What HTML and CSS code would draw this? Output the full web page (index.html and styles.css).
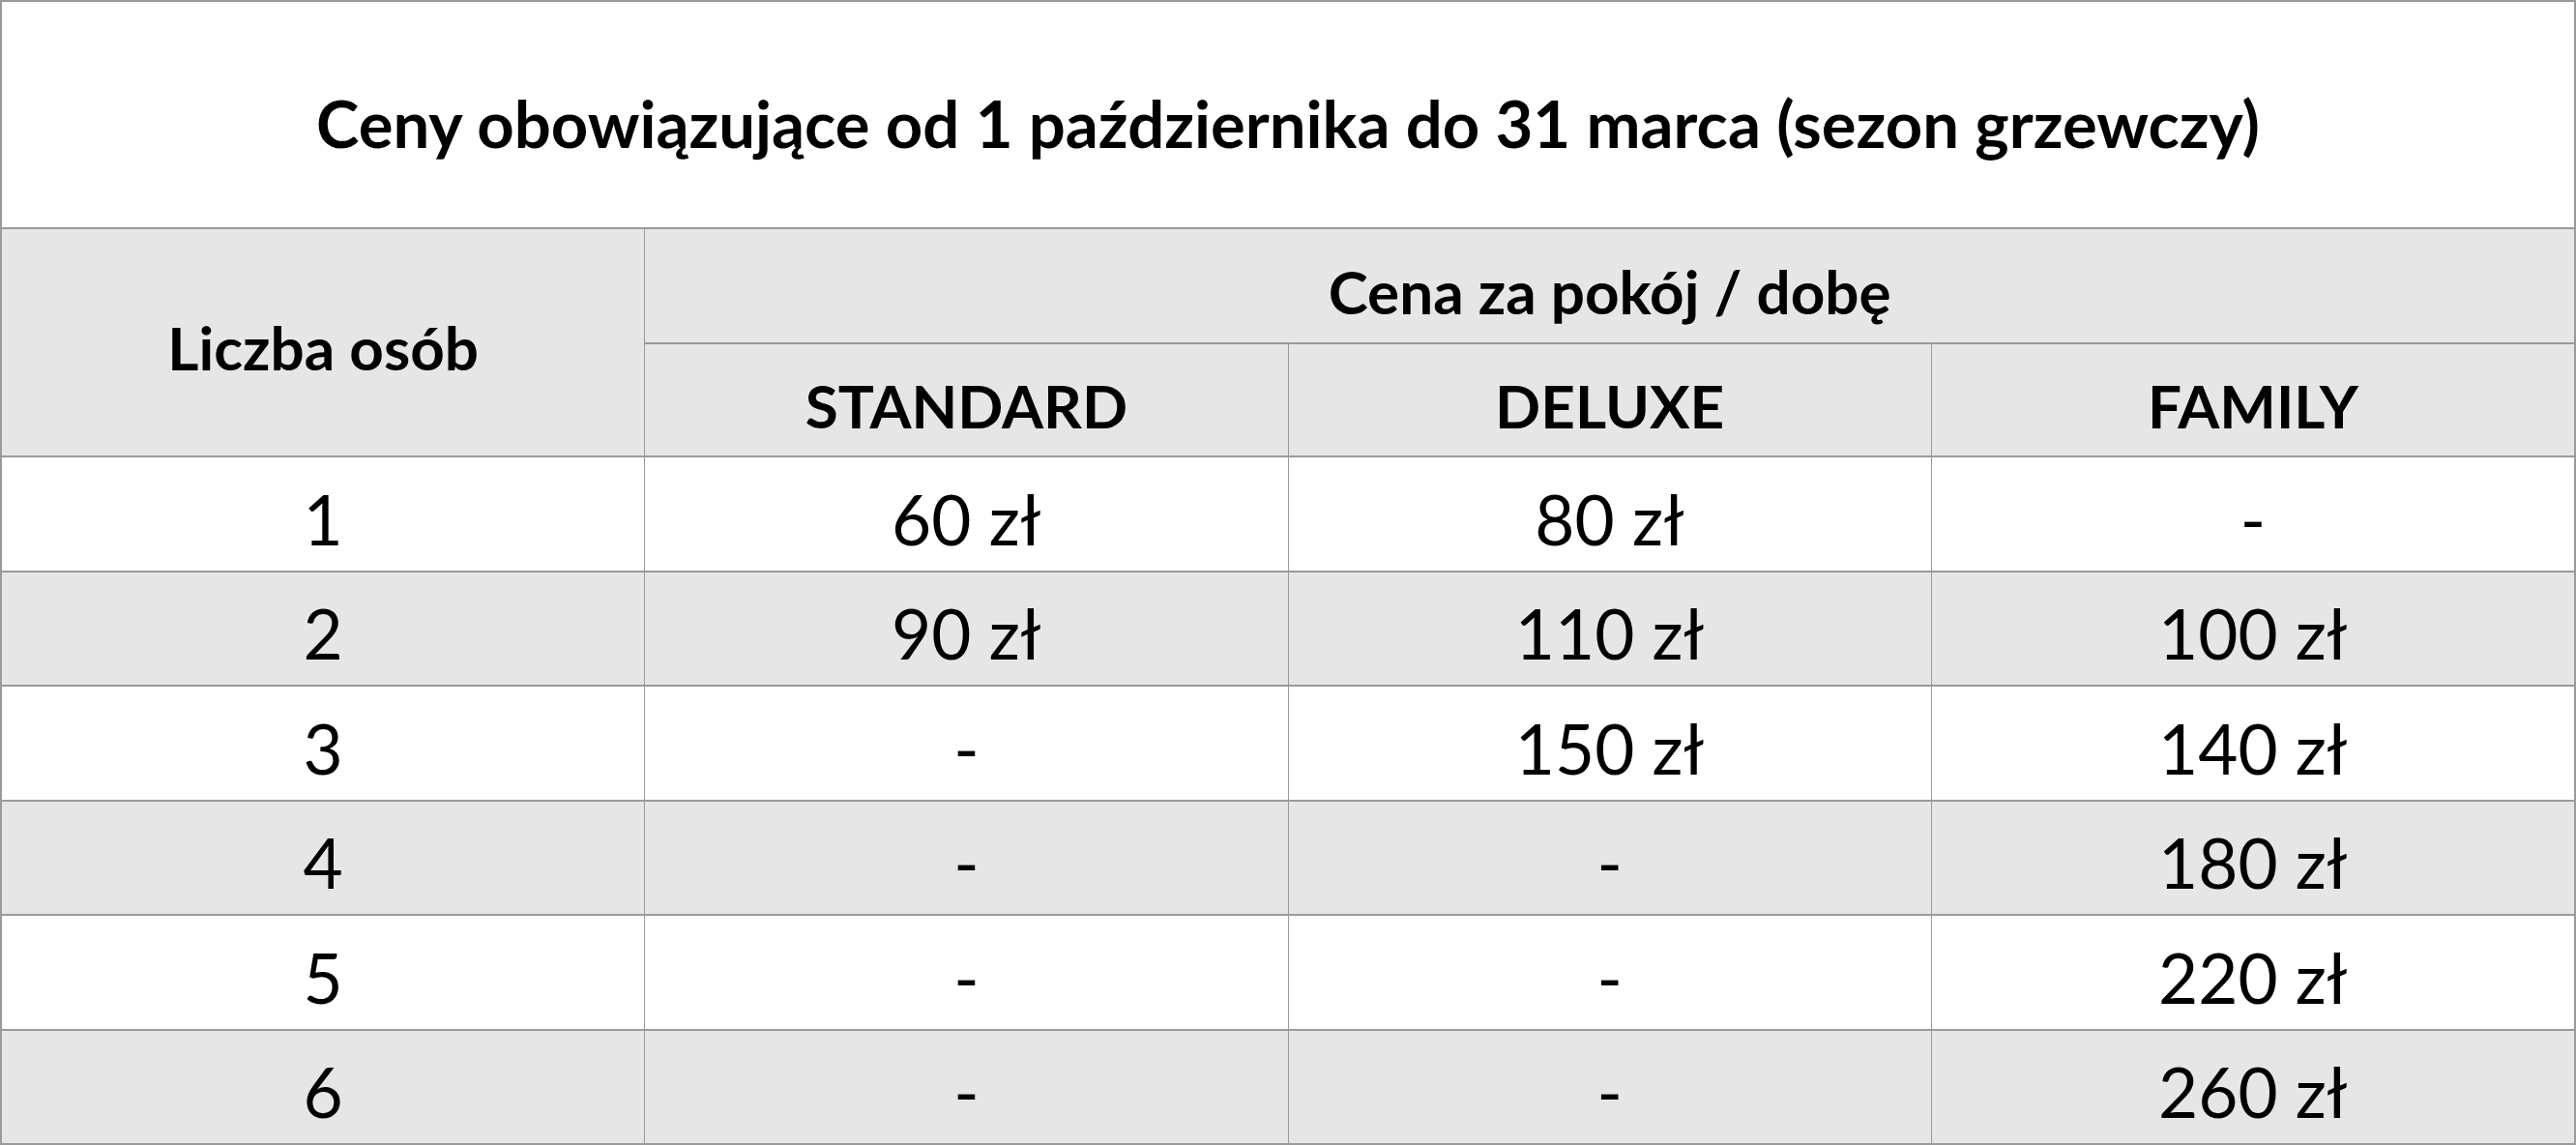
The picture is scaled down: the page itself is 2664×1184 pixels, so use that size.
FILE: index.html
```html
<!DOCTYPE html>
<html lang="pl">
<head>
<meta charset="utf-8">
<title>Ceny</title>
<link rel="stylesheet" href="styles.css">
</head>
<body>
<div class="table">
  <div class="cell title">Ceny obowiązujące od 1 października do 31 marca (sezon grzewczy)</div>
  <div class="cell head persons">Liczba osób</div>
  <div class="cell head price">Cena za pokój / dobę</div>
  <div class="cell head">STANDARD</div>
  <div class="cell head">DELUXE</div>
  <div class="cell head">FAMILY</div>

  <div class="cell">1</div><div class="cell">60 zł</div><div class="cell">80 zł</div><div class="cell">-</div>
  <div class="cell alt">2</div><div class="cell alt">90 zł</div><div class="cell alt">110 zł</div><div class="cell alt">100 zł</div>
  <div class="cell">3</div><div class="cell">-</div><div class="cell">150 zł</div><div class="cell">140 zł</div>
  <div class="cell alt">4</div><div class="cell alt">-</div><div class="cell alt">-</div><div class="cell alt">180 zł</div>
  <div class="cell">5</div><div class="cell">-</div><div class="cell">-</div><div class="cell">220 zł</div>
  <div class="cell alt">6</div><div class="cell alt">-</div><div class="cell alt">-</div><div class="cell alt">260 zł</div>
</div>
</body>
</html>
```

FILE: styles.css
```css
html, body {
  margin: 0;
  padding: 0;
  background: #ffffff;
}

.table {
  box-sizing: border-box;
  width: 2664px;
  height: 1184px;
  border: 2px solid #9a9a9a;
  background: #9a9a9a;
  display: grid;
  grid-template-columns: repeat(4, 1fr);
  grid-template-rows: 233px 117px 115px repeat(6, 1fr);
  gap: 2px 1px;
  font-family: "Lato", "Noto Sans", sans-serif;
  color: #000;
}

.cell {
  background: #ffffff;
  display: flex;
  align-items: center;
  justify-content: center;
  font-size: 71px;
  font-weight: 400;
  padding-top: 10px;
  box-sizing: border-box;
}

.alt {
  background: #e6e6e6;
}

.title {
  grid-column: 1 / 5;
  font-size: 67px;
  font-weight: 700;
  padding-top: 16px;
}

.head {
  background: #e6e6e6;
  font-size: 62px;
  font-weight: 700;
}

.persons {
  grid-row: 2 / 4;
}

.price {
  grid-column: 2 / 5;
}
```
